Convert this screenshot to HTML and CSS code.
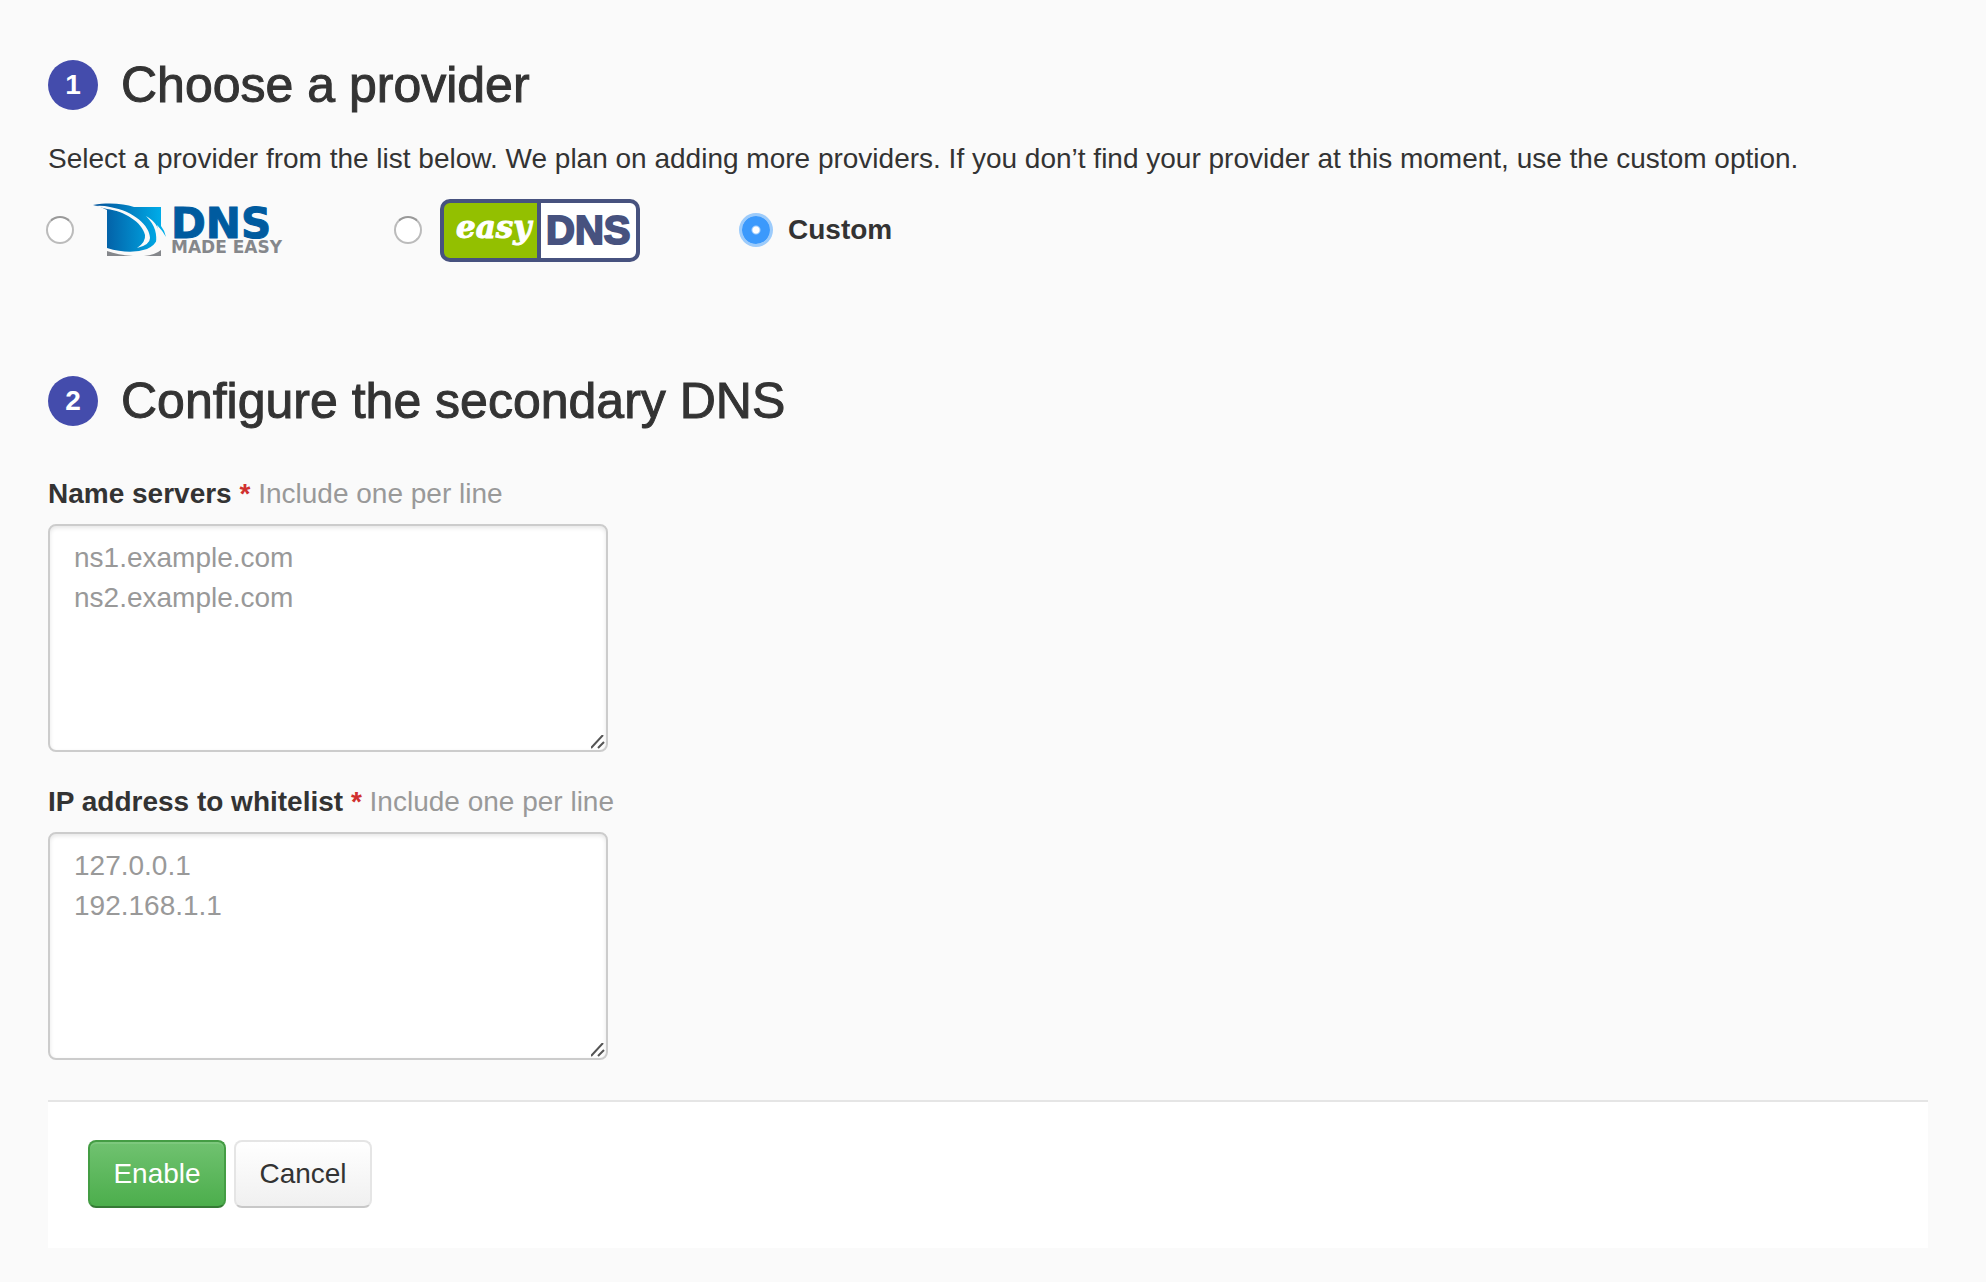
FILE: index.html
```html
<!DOCTYPE html>
<html lang="en">
<head>
<meta charset="utf-8">
<meta name="viewport" content="width=device-width, initial-scale=1">
<title>Secondary DNS</title>
<link rel="stylesheet" href="styles.css">
</head>
<body>
<form class="setup">
  <section class="step step-provider">
    <h2 class="step-title"><span class="step-number">1</span>Choose a provider</h2>
    <p class="intro">Select a provider from the list below. We plan on adding more providers. If you don’t find your provider at this moment, use the custom option.</p>
    <div class="providers">
      <label class="provider">
        <input class="radio" type="radio" name="provider" value="dnsmadeeasy" aria-label="DNS Made Easy">
        <svg class="logo" viewBox="0 0 200 64" role="img" aria-label="DNS Made Easy">
          <defs>
            <linearGradient id="sky" x1="0" y1="0" x2="1" y2="0">
              <stop offset="0.1" stop-color="#0359a0"/>
              <stop offset="0.95" stop-color="#00aeea"/>
            </linearGradient>
          </defs>
          <path fill="url(#sky)" d="M1 7C18 4 32 6 42 9H69V28Q73 33 74 39Q70 32 65 27C68 38 66 46 55 51Q38 57 15 50V12Q8 8 1 7Z"/>
          <path fill="#fafafa" d="M3 8Q10 7 18 9C42 13 58 28 58 40Q58 47 45 50Q54 44 53 37C50 24 32 13 15 11Z"/>
          <path fill="#fafafa" d="M54 18C67 25 71 38 64 47C65 36 64 28 54 18Z"/>
          <path fill="#85878b" d="M15 53Q26 57 41 58H15ZM52 58Q63 57 69 52V58Z"/>
          <text class="logo-dns" x="79" y="40">DNS</text>
          <text class="logo-made" x="79" y="55">MADE EASY</text>
        </svg>
      </label>
      <label class="provider">
        <input class="radio" type="radio" name="provider" value="easydns" aria-label="easyDNS">
        <svg class="logo" viewBox="0 0 200 64" role="img" aria-label="easyDNS">
          <rect x="2" y="3" width="196" height="59" rx="8" fill="#fff"/>
          <path fill="#93c000" d="M10 3H98V62H10Q2 62 2 54V11Q2 3 10 3Z"/>
          <path fill="none" stroke="#47527f" stroke-width="4" d="M99 3V62"/>
          <rect x="2" y="3" width="196" height="59" rx="8" fill="none" stroke="#47527f" stroke-width="4"/>
          <text class="logo-easy" x="16" y="40">easy</text>
          <text class="logo-easy-dns" x="106" y="46">DNS</text>
        </svg>
      </label>
      <label class="provider">
        <input class="radio" type="radio" name="provider" value="custom" checked>
        <span>Custom</span>
      </label>
    </div>
  </section>

  <section class="step">
    <h2 class="step-title"><span class="step-number">2</span>Configure the secondary DNS</h2>
    <div class="fields">
      <div class="field">
        <label for="servers">Name servers <span class="required">*</span> <span class="hint">Include one per line</span></label>
        <textarea id="servers" placeholder="ns1.example.com&#10;ns2.example.com"></textarea>
      </div>
      <div class="field">
        <label for="addresses">IP address to whitelist <span class="required">*</span> <span class="hint">Include one per line</span></label>
        <textarea id="addresses" placeholder="127.0.0.1&#10;192.168.1.1"></textarea>
      </div>
    </div>
  </section>

  <footer class="actions">
    <button class="button button-primary" type="submit">Enable</button>
    <button class="button" type="button">Cancel</button>
  </footer>
</form>
</body>
</html>
```
FILE: styles.css
```css
* {
  box-sizing: border-box;
}

body {
  margin: 0;
  background: #fafafa;
  color: #333;
  font: 28px/40px "Liberation Sans", Helvetica, Arial, sans-serif;
}

.setup {
  padding: 60px 58px 34px 48px;
}

.step-title {
  display: flex;
  align-items: center;
  gap: 23px;
  margin: 0;
  font-size: 50px;
  font-weight: 500;
  line-height: 50px;
  -webkit-text-stroke: 1px #333;
}

.step-number {
  flex: none;
  width: 50px;
  height: 50px;
  border-radius: 50%;
  background: #444cac;
  color: #fff;
  font-size: 28px;
  font-weight: bold;
  text-align: center;
  -webkit-text-stroke: 0;
}

.step-provider {
  margin-bottom: 114px;
}

.intro {
  margin: 29px 0 19px;
}

.providers {
  display: flex;
  flex-wrap: wrap;
}

.provider {
  display: flex;
  align-items: center;
  gap: 18px;
  width: 348px;
  height: 64px;
  font-weight: bold;
}

.radio {
  appearance: none;
  flex: none;
  width: 28px;
  height: 28px;
  margin: 0 0 0 -2px;
  border: 2px solid #bbb;
  border-top-color: #999;
  border-radius: 50%;
  background: #fff;
}

.radio:checked {
  border: 0;
  background: radial-gradient(circle, #fff 3px, #3b99fc 5px);
  box-shadow: 0 0 0 3px #9ccbfb;
}

.logo {
  width: 200px;
  height: 64px;
}

.logo-dns {
  fill: #005b9f;
  stroke: #005b9f;
  stroke-width: 1px;
  font: bold 42px "DejaVu Sans", sans-serif;
}

.logo-made {
  fill: #85878b;
  font: bold 17px "DejaVu Sans", sans-serif;
}

.logo-easy {
  fill: #fff;
  stroke: #fff;
  stroke-width: 1px;
  font: italic bold 31px "DejaVu Serif", serif;
}

.logo-easy-dns {
  fill: #47527f;
  stroke: #47527f;
  stroke-width: 2px;
  font: bold 40px "Liberation Sans", sans-serif;
}

.fields {
  display: grid;
  gap: 30px;
  margin: 48px 0 40px;
}

.field {
  display: grid;
  justify-items: start;
  gap: 10px;
  font-weight: bold;
}

.required {
  color: #d0302f;
}

.hint {
  color: #999;
  font-weight: normal;
}

textarea {
  width: 560px;
  max-width: 100%;
  height: 228px;
  padding: 12px 24px;
  border: 2px solid #ccc;
  border-radius: 8px;
  background: #fff;
  box-shadow: inset 0 2px 4px rgba(0, 0, 0, 0.1);
  color: #333;
  font: inherit;
  font-weight: normal;
  resize: both;
}

textarea::placeholder {
  color: #999;
}

textarea::-webkit-resizer {
  background: url("data:image/svg+xml,%3Csvg xmlns='http://www.w3.org/2000/svg' viewBox='0 0 15 15'%3E%3Cpath d='M0 13L12 0M7 13L13 7' fill='none' stroke='%23555' stroke-width='2'/%3E%3C/svg%3E") center / 100% no-repeat;
}

.actions {
  display: flex;
  gap: 8px;
  padding: 38px 40px 40px;
  border-top: 2px solid #e5e5e5;
  background: #fff;
}

.button {
  min-width: 138px;
  padding: 12px 23px;
  border: 2px solid #e5e5e5;
  border-bottom-color: #c8c8c8;
  border-radius: 8px;
  background: linear-gradient(#fff, #f0f0f0);
  color: #333;
  font: inherit;
}

.button-primary {
  border-color: #449d44;
  border-bottom-color: #357a35;
  background: linear-gradient(#70c270, #4cae4c);
  box-shadow: inset 0 2px 0 rgba(255, 255, 255, 0.1);
  color: #fff;
}
```
